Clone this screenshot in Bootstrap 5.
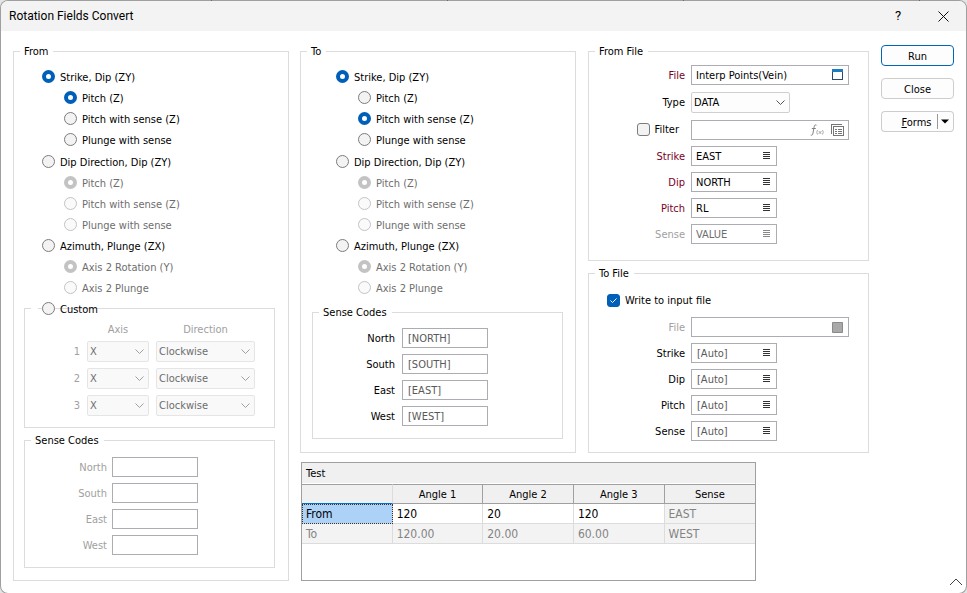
<!DOCTYPE html>
<html lang="en">
<head>
<meta charset="utf-8">
<meta name="viewport" content="width=device-width, initial-scale=1">
<title>Rotation Fields Convert</title>
<link href="https://cdn.jsdelivr.net/npm/bootstrap@5.3.0/dist/css/bootstrap.min.css" rel="stylesheet">
<style>
  :root { --line: #dcdcdc; --field: #abadb3; --blue: #005fb8; --muted: #6d6d6d; --faint: #a0a0a0; }
  body {
    font-family: "DejaVu Sans Condensed", "Noto Sans", sans-serif;
    font-size: 11px; line-height: 15px; color: #000;
    background: linear-gradient(90deg, transparent 211px, #333 211px, #333 212px, transparent 212px) 0 0 / 236px 100%, #e4e4e4;
  }
  .dialog { border: 1px solid rgba(130, 130, 130, .7); border-radius: 8px; background: #fff; background-clip: padding-box; overflow: hidden; }
  .titlebar { background: #f3f3f3; height: 30px; padding: 0 14px 0 8px; font-family: Roboto, "Noto Sans", sans-serif; font-size: 12px; }
  .title-tools { gap: 27px; }
  .title-btn { border: 0; background: none; padding: 0; width: 18px; height: 18px; line-height: 18px; font-size: 13px; }
  .content { padding: 13px 12px 12px; }
  .left-pane { flex: 1 1 276px; margin-right: 11px; }
  .right-pane { flex: 2 1 569px; }
  .to-pane { flex: 1 1 276px; }
  .file-pane { flex: 1 1 281px; gap: 5px; }
  .pane-row { gap: 12px; }
  .side { width: 73px; gap: 12px; padding-top: 1px; margin-left: 12px; }

  .group { border: 1px solid var(--line); min-width: 0; }
  .group > legend { float: none; width: auto; margin: 0 0 0 6px; padding: 0 5px 0 4px; font-size: 11px; line-height: 15px; }
  .pane-body { padding: 7px 13px 12px 10px; }
  .to-pane .pane-body { padding: 7px 12px 12px 11px; }
  .from-opts { padding-left: 18px; }
  .to-opts { padding-left: 24px; }
  .opt { height: 21px; gap: 5px; }
  .opt label { padding-top: 1px; }
  .opt.sub { margin-left: 22px; }
  .opt-set:first-child { padding-bottom: 1px; }

  .form-check-input { width: 13px; height: 13px; margin: 0; border: 1px solid #7c7c7c; background-color: #f3f3f3; flex: none; }
  .form-check-input[type=radio]:checked { border: 4px solid var(--blue); background: #fff; }
  .form-check-input[type=checkbox] { border-radius: 3px; }
  .form-check-input[type=checkbox]:checked {
    border-color: var(--blue);
    background: var(--blue) url("data:image/svg+xml,%3csvg xmlns='http://www.w3.org/2000/svg' viewBox='0 0 11 11'%3e%3cpath fill='none' stroke='%23fff' d='M2.5 5.5l2 2 4-4'/%3e%3c/svg%3e") center / 11px;
  }
  .form-check-input:disabled { opacity: 1; border-color: #c3c3c3; background-color: #fafafa; }
  .form-check-input[type=radio]:checked:disabled { border-color: #c3c3c3; background: #fff; }
  .form-check-input:disabled ~ label { opacity: 1; color: var(--muted); }

  .custom-row { position: relative; z-index: 1; }
  .custom-box { position: relative; margin-top: -11px; padding: 13px 0 11px; border: 1px solid var(--line); }
  .custom-box::before { content: ""; position: absolute; top: -1px; left: 6px; width: 7px; height: 1px; background: #fff; }
  .axis-grid { display: grid; grid-template-columns: 55px 62px 99px; column-gap: 7px; row-gap: 6px; align-items: center; color: var(--faint); }
  .axis-head { text-align: center; margin-bottom: -2px; }

  .form-select {
    height: 21px; min-height: 0; padding: 0 18px 0 2px; font-size: 11px; line-height: 19px; color: #000;
    border: 1px solid #d0d0d0; border-radius: 2px; background-color: #fdfdfd; background-position: right 3px center; background-size: 11px 11px;
    background-image: url("data:image/svg+xml,%3csvg xmlns='http://www.w3.org/2000/svg' viewBox='0 0 11 11'%3e%3cpath fill='none' stroke='%23555' d='M1.5 3.5l4 4 4-4'/%3e%3c/svg%3e");
  }
  .form-select:disabled {
    color: var(--muted); background-color: #f9f9f9; border-color: #e5e5e5; opacity: 1;
    background-image: url("data:image/svg+xml,%3csvg xmlns='http://www.w3.org/2000/svg' viewBox='0 0 11 11'%3e%3cpath fill='none' stroke='%23a0a0a0' d='M1.5 3.5l4 4 4-4'/%3e%3c/svg%3e");
  }
  .type-select { width: 99px; }

  .fields { display: grid; row-gap: 6px; }
  .field { display: flex; align-items: center; }
  .field > label, .field > .lead-cell { flex: none; text-align: right; }
  .box { display: flex; align-items: center; height: 20px; border: 1px solid var(--field); background: #fff; width: 86px; padding: 0 6px 0 4px; }
  .box.wide { width: 158px; gap: 7px; padding-right: 4px; }
  .box input { flex: 1 1 0; min-width: 0; width: 0; border: 0; padding: 0; background: none; font-size: 11px; line-height: 15px; height: 18px; color: #000; outline: 0; }
  .box input:disabled { color: var(--muted); }
  .box input[placeholder] { padding-left: 1px; }
  .box input::placeholder { color: #595959; opacity: 1; }
  .icon-btn { border: 0; background: none; padding: 0; display: flex; color: #333; }
  .icon-btn:disabled { color: #888; }
  .need { color: #7a0026; }
  .off { color: var(--faint); }

  .codes-from { margin-top: 5px; }
  .codes-to { margin-top: 7px; }
  .codes-body { padding: 9px 0 12px; }
  .codes-to .codes-body { padding-top: 8px; }
  .codes-from .field > label { width: 82px; margin-right: 5px; }
  .codes-to .field > label { width: 82px; margin-right: 7px; }
  .from-file { padding: 6px 0 16px; }
  .to-file { padding: 9px 0 11px; }
  .file-fields .field > label, .file-fields .lead-cell { width: 96px; margin-right: 6px; }
  .file-fields .type-row { height: 22px; }
  .file-fields .filter-row { height: 21px; }
  .lead-cell { display: flex; align-items: center; justify-content: flex-end; gap: 5px; padding-right: 6px; }
  .write-row { height: 21px; gap: 5px; padding-left: 18px; }

  .test { width: 80%; margin: 9px 0 0 1px; border: 1px solid #a0a0a0; flex: 1 1 auto; }
  .test-title { height: 20px; padding: 3px 4px; background: #f0f0f0; }
  .test table { table-layout: fixed; width: 100%; margin-top: 1px; border-collapse: separate; border-spacing: 0; }
  .test thead th { height: 20px; padding: 0; font-weight: 400; text-align: center; background: #f0f0f0; border: solid #a0a0a0; border-width: 1px 1px 1px 0; }
  .test thead th:first-child { border-right-color: #dcdcdc; border-bottom: 1px solid #0072c9; }
  .test tbody :is(th, td) { height: 20px; padding: 1px 4px 0; font-weight: 400; font-size: 12px; border: solid var(--line); border-width: 0 1px 1px 0; }
  .test :is(th, td):last-child { border-right: 0; }
  .test tbody .ro { background: #f3f3f3; color: #838383; }
  .test tbody .sel { background: #add2f7; outline: 1px dotted #333; outline-offset: -1px; }

  .side .btn { font-size: 11px; line-height: 15px; height: 21px; padding: 1px 0 0; color: #000; background: #fdfdfd; border: 1px solid #cdcdcd; border-radius: 4px; }
  .side .btn.run { border-color: #0067b8; }
  .side .btn-group .btn { border-right: 0; flex: 1 1 auto; padding-left: 14px; border-radius: 4px 0 0 4px; }
  .side .btn-group .btn.drop { flex: 0 0 17px; border-right: 1px solid #cdcdcd; border-left: 0; padding: 0; margin: 0; border-radius: 0 4px 4px 0; display: flex; align-items: center; justify-content: center; }
  .side .btn-group .btn.drop::before { content: ""; position: absolute; left: 0; top: 2px; bottom: 2px; width: 1px; background: #999; }
  .expand { position: absolute; right: 3px; bottom: 7px; border: 0; background: none; padding: 0; display: flex; }
</style>
<script src="https://cdn.jsdelivr.net/npm/bootstrap@5.3.0/dist/js/bootstrap.bundle.min.js"></script>
</head>
<body>
<svg class="d-none" aria-hidden="true">
  <symbol id="lines" viewBox="0 0 8 8"><path d="M1 .5h7M1 2.5h7M1 4.5h7M1 6.5h7" stroke="currentColor" fill="none" shape-rendering="crispEdges"/></symbol>
</svg>
<main class="dialog position-relative d-flex flex-column min-vh-100">
  <header class="titlebar d-flex align-items-center justify-content-between">
    <span>Rotation Fields Convert</span>
    <span class="title-tools d-flex align-items-center">
      <button type="button" class="title-btn" aria-label="Help">?</button>
      <button type="button" class="title-btn d-flex align-items-center justify-content-center" aria-label="Close window"><svg width="11" height="11" viewBox="0 0 11 11"><path d="M.5.5l10 10M10.5.5l-10 10" stroke="#111" fill="none"/></svg></button>
    </span>
  </header>

  <div class="content d-flex flex-grow-1">
    <fieldset class="group left-pane">
      <legend>From</legend>
      <div class="pane-body">
        <div class="from-opts">
          <div class="opt-set">
            <div class="opt d-flex align-items-center"><input class="form-check-input" type="radio" name="f" id="f1" checked><label for="f1">Strike, Dip (ZY)</label></div>
            <div class="opt sub d-flex align-items-center"><input class="form-check-input" type="radio" name="fa" id="fa1" checked><label for="fa1">Pitch (Z)</label></div>
            <div class="opt sub d-flex align-items-center"><input class="form-check-input" type="radio" name="fa" id="fa2"><label for="fa2">Pitch with sense (Z)</label></div>
            <div class="opt sub d-flex align-items-center"><input class="form-check-input" type="radio" name="fa" id="fa3"><label for="fa3">Plunge with sense</label></div>
          </div>
          <div class="opt-set">
            <div class="opt d-flex align-items-center"><input class="form-check-input" type="radio" name="f" id="f2"><label for="f2">Dip Direction, Dip (ZY)</label></div>
            <div class="opt sub d-flex align-items-center"><input class="form-check-input" type="radio" name="fb" id="fb1" checked disabled><label for="fb1">Pitch (Z)</label></div>
            <div class="opt sub d-flex align-items-center"><input class="form-check-input" type="radio" name="fb" id="fb2" disabled><label for="fb2">Pitch with sense (Z)</label></div>
            <div class="opt sub d-flex align-items-center"><input class="form-check-input" type="radio" name="fb" id="fb3" disabled><label for="fb3">Plunge with sense</label></div>
          </div>
          <div class="opt-set">
            <div class="opt d-flex align-items-center"><input class="form-check-input" type="radio" name="f" id="f3"><label for="f3">Azimuth, Plunge (ZX)</label></div>
            <div class="opt sub d-flex align-items-center"><input class="form-check-input" type="radio" name="fc" id="fc1" checked disabled><label for="fc1">Axis 2 Rotation (Y)</label></div>
            <div class="opt sub d-flex align-items-center"><input class="form-check-input" type="radio" name="fc" id="fc2" disabled><label for="fc2">Axis 2 Plunge</label></div>
          </div>
          <div class="opt custom-row d-flex align-items-center"><input class="form-check-input" type="radio" name="f" id="f4"><label for="f4">Custom</label></div>
        </div>
        <div class="custom-box" role="group" aria-label="Custom">
          <div class="axis-grid">
            <span></span><span class="axis-head">Axis</span><span class="axis-head">Direction</span>
            <label class="text-end" for="a1">1</label><select class="form-select" id="a1" disabled><option>X</option></select><select class="form-select" aria-label="Direction 1" disabled><option>Clockwise</option></select>
            <label class="text-end" for="a2">2</label><select class="form-select" id="a2" disabled><option>X</option></select><select class="form-select" aria-label="Direction 2" disabled><option>Clockwise</option></select>
            <label class="text-end" for="a3">3</label><select class="form-select" id="a3" disabled><option>X</option></select><select class="form-select" aria-label="Direction 3" disabled><option>Clockwise</option></select>
          </div>
        </div>
        <fieldset class="group codes-from">
          <legend>Sense Codes</legend>
          <div class="codes-body fields">
            <div class="field"><label class="off" for="n1">North</label><div class="box"><input id="n1" disabled></div></div>
            <div class="field"><label class="off" for="s1">South</label><div class="box"><input id="s1" disabled></div></div>
            <div class="field"><label class="off" for="e1">East</label><div class="box"><input id="e1" disabled></div></div>
            <div class="field"><label class="off" for="w1">West</label><div class="box"><input id="w1" disabled></div></div>
          </div>
        </fieldset>
      </div>
    </fieldset>

    <div class="right-pane d-flex flex-column">
      <div class="pane-row d-flex">
        <fieldset class="group to-pane">
          <legend>To</legend>
          <div class="pane-body">
            <div class="to-opts">
              <div class="opt-set">
                <div class="opt d-flex align-items-center"><input class="form-check-input" type="radio" name="t" id="t1" checked><label for="t1">Strike, Dip (ZY)</label></div>
                <div class="opt sub d-flex align-items-center"><input class="form-check-input" type="radio" name="ta" id="ta1"><label for="ta1">Pitch (Z)</label></div>
                <div class="opt sub d-flex align-items-center"><input class="form-check-input" type="radio" name="ta" id="ta2" checked><label for="ta2">Pitch with sense (Z)</label></div>
                <div class="opt sub d-flex align-items-center"><input class="form-check-input" type="radio" name="ta" id="ta3"><label for="ta3">Plunge with sense</label></div>
              </div>
              <div class="opt-set">
                <div class="opt d-flex align-items-center"><input class="form-check-input" type="radio" name="t" id="t2"><label for="t2">Dip Direction, Dip (ZY)</label></div>
                <div class="opt sub d-flex align-items-center"><input class="form-check-input" type="radio" name="tb" id="tb1" checked disabled><label for="tb1">Pitch (Z)</label></div>
                <div class="opt sub d-flex align-items-center"><input class="form-check-input" type="radio" name="tb" id="tb2" disabled><label for="tb2">Pitch with sense (Z)</label></div>
                <div class="opt sub d-flex align-items-center"><input class="form-check-input" type="radio" name="tb" id="tb3" disabled><label for="tb3">Plunge with sense</label></div>
              </div>
              <div class="opt-set">
                <div class="opt d-flex align-items-center"><input class="form-check-input" type="radio" name="t" id="t3"><label for="t3">Azimuth, Plunge (ZX)</label></div>
                <div class="opt sub d-flex align-items-center"><input class="form-check-input" type="radio" name="tc" id="tc1" checked disabled><label for="tc1">Axis 2 Rotation (Y)</label></div>
                <div class="opt sub d-flex align-items-center"><input class="form-check-input" type="radio" name="tc" id="tc2" disabled><label for="tc2">Axis 2 Plunge</label></div>
              </div>
            </div>
            <fieldset class="group codes-to">
              <legend>Sense Codes</legend>
              <div class="codes-body fields">
                <div class="field"><label for="n2">North</label><div class="box"><input id="n2" placeholder="[NORTH]"></div></div>
                <div class="field"><label for="s2">South</label><div class="box"><input id="s2" placeholder="[SOUTH]"></div></div>
                <div class="field"><label for="e2">East</label><div class="box"><input id="e2" placeholder="[EAST]"></div></div>
                <div class="field"><label for="w2">West</label><div class="box"><input id="w2" placeholder="[WEST]"></div></div>
              </div>
            </fieldset>
          </div>
        </fieldset>

        <div class="file-pane d-flex flex-column">
          <fieldset class="group">
            <legend>From File</legend>
            <div class="from-file fields file-fields">
              <div class="field"><label class="need" for="ff">File</label><div class="box wide"><input id="ff" value="Interp Points(Vein)"><button type="button" class="icon-btn" aria-label="Browse file"><svg width="12" height="12" viewBox="0 0 12 12" shape-rendering="crispEdges"><path d="M.5.5h10v10H.5z" fill="#fff" stroke="#2c4a66"/><path d="M0 0h11v3H0z" fill="#1c7cc0"/></svg></button></div></div>
              <div class="field type-row"><label for="ft">Type</label><select class="form-select type-select" id="ft"><option>DATA</option></select></div>
              <div class="field filter-row"><div class="lead-cell"><input class="form-check-input" type="checkbox" id="fl"><label for="fl">Filter</label></div><div class="box wide"><input aria-label="Filter">
                <button type="button" class="icon-btn" aria-label="Filter expression"><svg width="14" height="12" viewBox="0 0 14 12"><path d="M6.5 1.2C5 .3 4.300 1.500 4 3.500L3 9c-.3 2-1 2.600-2.300 2M1.800 4.500h4" fill="none" stroke="#808080"/><path d="M7.500 6q-1.500 2.200 0 4.500M12.500 6q1.500 2.200 0 4.500M8.800 7l2.500 3M11.500 7l-3 3" fill="none" stroke="#959595" stroke-width=".8"/></svg></button>
                <button type="button" class="icon-btn" aria-label="Filter list"><svg width="13" height="12" viewBox="0 0 13 12" shape-rendering="crispEdges"><path d="M.5 9.500v-9h10M2.500 2.500h10v9h-10zM4 5.500h2M7 5.500h4M4 7.500h2M7 7.500h4M4 9.500h2M7 9.500h4" fill="none" stroke="#757575"/></svg></button></div></div>
              <div class="field"><label class="need" for="fs">Strike</label><div class="box"><input id="fs" value="EAST"><button type="button" class="icon-btn" aria-label="Pick strike"><svg width="8" height="8"><use href="#lines"/></svg></button></div></div>
              <div class="field"><label class="need" for="fd">Dip</label><div class="box"><input id="fd" value="NORTH"><button type="button" class="icon-btn" aria-label="Pick dip"><svg width="8" height="8"><use href="#lines"/></svg></button></div></div>
              <div class="field"><label class="need" for="fp">Pitch</label><div class="box"><input id="fp" value="RL"><button type="button" class="icon-btn" aria-label="Pick pitch"><svg width="8" height="8"><use href="#lines"/></svg></button></div></div>
              <div class="field"><label class="off" for="fn">Sense</label><div class="box"><input id="fn" value="VALUE" disabled><button type="button" class="icon-btn" disabled aria-label="Pick sense"><svg width="8" height="8"><use href="#lines"/></svg></button></div></div>
            </div>
          </fieldset>
          <fieldset class="group flex-grow-1">
            <legend>To File</legend>
            <div class="to-file fields file-fields">
              <div class="write-row d-flex align-items-center"><input class="form-check-input" type="checkbox" id="wr" checked><label for="wr">Write to input file</label></div>
              <div class="field"><label class="off" for="tf">File</label><div class="box wide"><input id="tf" disabled><button type="button" class="icon-btn" disabled aria-label="Browse output file"><svg width="12" height="11" viewBox="0 0 12 11"><path d="M.5.5h10v10H.5z" fill="#a9a9a9" stroke="#8a8a8a"/></svg></button></div></div>
              <div class="field"><label for="ts">Strike</label><div class="box"><input id="ts" placeholder="[Auto]"><button type="button" class="icon-btn" aria-label="Pick output strike"><svg width="8" height="8"><use href="#lines"/></svg></button></div></div>
              <div class="field"><label for="td">Dip</label><div class="box"><input id="td" placeholder="[Auto]"><button type="button" class="icon-btn" aria-label="Pick output dip"><svg width="8" height="8"><use href="#lines"/></svg></button></div></div>
              <div class="field"><label for="tp">Pitch</label><div class="box"><input id="tp" placeholder="[Auto]"><button type="button" class="icon-btn" aria-label="Pick output pitch"><svg width="8" height="8"><use href="#lines"/></svg></button></div></div>
              <div class="field"><label for="tn">Sense</label><div class="box"><input id="tn" placeholder="[Auto]"><button type="button" class="icon-btn" aria-label="Pick output sense"><svg width="8" height="8"><use href="#lines"/></svg></button></div></div>
            </div>
          </fieldset>
        </div>
      </div>

      <section class="test">
        <div class="test-title" id="test-title">Test</div>
        <table aria-labelledby="test-title">
          <thead><tr><th scope="col" aria-label="Row"></th><th scope="col">Angle 1</th><th scope="col">Angle 2</th><th scope="col">Angle 3</th><th scope="col">Sense</th></tr></thead>
          <tbody>
            <tr><th scope="row" class="sel">From</th><td>120</td><td>20</td><td>120</td><td class="ro">EAST</td></tr>
            <tr><th scope="row" class="ro">To</th><td class="ro">120.00</td><td class="ro">20.00</td><td class="ro">60.00</td><td class="ro">WEST</td></tr>
          </tbody>
        </table>
      </section>
    </div>

    <div class="side d-flex flex-column flex-shrink-0">
      <button type="button" class="btn run">Run</button>
      <button type="button" class="btn">Close</button>
      <div class="btn-group">
        <button type="button" class="btn"><u>F</u>orms</button>
        <button type="button" class="btn drop" aria-label="More form actions"><svg width="8" height="5" viewBox="0 0 8 5"><path d="M0 .5h8L4 4.500z"/></svg></button>
      </div>
    </div>
  </div>
  <button type="button" class="expand" aria-label="Collapse"><svg width="14" height="8" viewBox="0 0 14 8"><path d="M1 7l6-6 6 6" fill="none" stroke="#444"/></svg></button>
</main>
</body>
</html>
